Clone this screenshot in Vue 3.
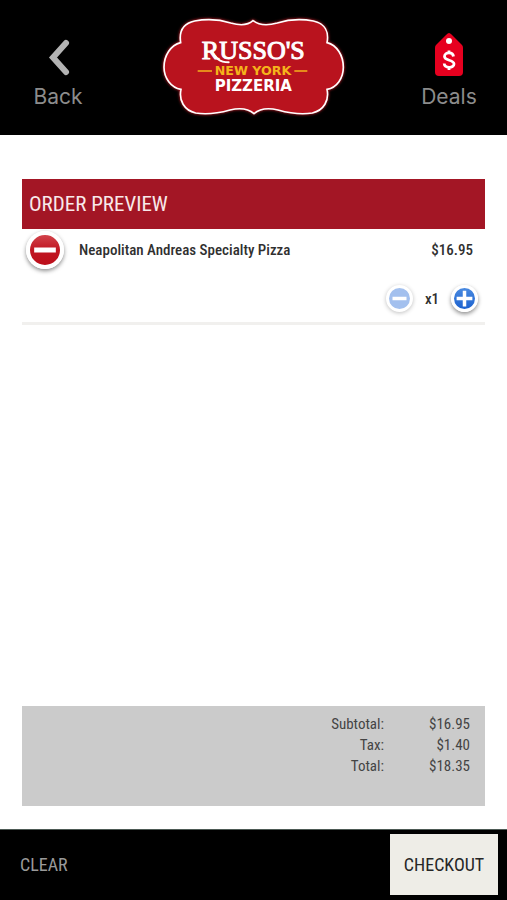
<script setup>
import { ref, computed } from 'vue'

const quantity = ref(1)
const price = 16.95
const tax = 1.4
const money = (n) => '$' + n.toFixed(2)
const lines = computed(() => [
  { label: 'Subtotal:', value: money(price * quantity.value) },
  { label: 'Tax:', value: money(tax * quantity.value) },
  { label: 'Total:', value: money((price + tax) * quantity.value) },
])
</script>

<template>
  <div class="screen">
    <header class="top">
      <a class="nav" href="#back">
        <svg class="nav-icon" viewBox="0 0 36 46" aria-hidden="true">
          <path d="M26 10 13 24.500 26 39" fill="none" stroke="#b3b3b3" stroke-width="6" stroke-linecap="round" />
        </svg>
        <span>Back</span>
      </a>
      <svg class="logo" viewBox="0 0 600 345" role="img">
        <path
          class="plaque"
          d="M297 38C315 52 342 53 370 45C405 34 445 33 478 39C514 47 525 73 519 104C549 112 568 142 568 178C568 210 549 239 519 244C526 277 510 307 475 315C440 321 408 316 372 306C342 299 316 303 300 317C284 303 258 299 228 306C192 316 160 321 125 315C90 307 74 277 81 244C51 239 30 210 30 178C30 142 50 112 80 104C75 73 86 47 122 39C155 33 195 34 230 45C258 53 282 52 297 38Z"
        />
        <text class="brand" x="298" y="153" text-anchor="middle">RUSSO'S</text>
        <path d="M172 128C184 150 196 163 224 163" fill="none" stroke="#fff" stroke-width="6" stroke-linecap="round" />
        <text class="city" x="297" y="202" text-anchor="middle">NEW YORK</text>
        <path d="M131 189H174M421 189H460" stroke="#f5b31b" stroke-width="5" />
        <text class="kind" x="298" y="250" text-anchor="middle">PIZZERIA</text>
      </svg>
      <a class="nav" href="#deals">
        <svg class="nav-icon" viewBox="0 0 36 46" aria-hidden="true">
          <path d="M18 0C19 0 20 1 21 2L31 12Q32 13 32 15V39Q32 43 28 43H8Q4 43 4 39V15Q4 13 5 12L15 2Q17 0 18 0Z" fill="#e6001f" />
          <circle cx="18" cy="8" r="3" fill="#fff" />
          <path d="M22.500 23.500C22 18.500 13.500 19 13.500 23.500C13.500 28 23 26.500 23 31C23 35.500 13.500 35.500 13.200 30.500M18 17.500V20.500M18 34V37" fill="none" stroke="#fff" stroke-width="2.800" />
        </svg>
        <span>Deals</span>
      </a>
    </header>

    <main class="body">
      <h1 class="title">ORDER PREVIEW</h1>
      <section class="item">
        <div class="row">
          <button class="disc remove" type="button" aria-label="Remove item">
            <svg viewBox="0 0 36 36"><path d="M5 18H31" stroke="#fff" stroke-width="6" /></svg>
          </button>
          <span class="name">Neapolitan Andreas Specialty Pizza</span>
          <span class="price">{{ money(price) }}</span>
        </div>
        <div class="stepper">
          <button class="disc minus" type="button" aria-label="Decrease quantity" @click="quantity = Math.max(1, quantity - 1)">
            <svg viewBox="0 0 24 24"><path d="M4 12H20" stroke="#fff" stroke-width="4" /></svg>
          </button>
          <span class="count">x{{ quantity }}</span>
          <button class="disc plus" type="button" aria-label="Increase quantity" @click="quantity++">
            <svg viewBox="0 0 24 24"><path d="M3 12H21M12 3V21" stroke="#fff" stroke-width="4" /></svg>
          </button>
        </div>
      </section>
      <dl class="totals">
        <div v-for="line in lines" :key="line.label" class="total">
          <dt>{{ line.label }}</dt>
          <dd>{{ line.value }}</dd>
        </div>
      </dl>
    </main>

    <footer class="actions">
      <button class="clear" type="button">CLEAR</button>
      <button class="checkout" type="button">CHECKOUT</button>
    </footer>
  </div>
</template>

<style>
body {
  margin: 0;
  background: #fff;
}
</style>

<style scoped>
.screen {
  display: flex;
  flex-direction: column;
  min-height: 100vh;
  font-family: "Roboto Condensed", "Liberation Sans Narrow", Roboto, sans-serif;
  color: #303030;
}
button {
  font: inherit;
  border: 0;
  padding: 0;
  cursor: pointer;
}
.top {
  display: flex;
  justify-content: space-between;
  align-items: flex-start;
  padding: 8px 22px 12px 22px;
  background: #000;
}
.nav {
  display: flex;
  flex-direction: column;
  align-items: center;
  gap: 6px;
  width: 72px;
  padding-top: 25px;
  font: 21px/24px Inter, sans-serif;
  color: #8c8c8c;
  text-decoration: none;
}
.nav-icon {
  width: 36px;
  height: 46px;
}
.logo {
  width: 200px;
  height: 115px;
}
.plaque {
  fill: #b9131e;
  stroke: #fff;
  stroke-width: 5;
  filter: drop-shadow(0 0 5px #e3202d);
}
.brand {
  font: 78px "Liberation Serif", serif;
  fill: #fff;
  stroke: #fff;
  stroke-width: 3;
}
.city {
  font: 700 38px "DejaVu Sans", sans-serif;
  fill: #f5b31b;
}
.kind {
  font: 700 45px "DejaVu Sans", sans-serif;
  fill: #fff;
}
.body {
  flex: 1;
  display: flex;
  flex-direction: column;
  padding: 44px 22px 23px;
}
.title {
  margin: 0;
  padding: 0 7px;
  font-size: 21px;
  font-weight: 400;
  line-height: 50px;
  color: #f8e9ea;
  background: #a31625;
}
.item {
  border-bottom: 3px solid #f1f0ee;
  font-size: 15px;
  font-weight: 500;
}
.row {
  display: flex;
  align-items: center;
  padding: 2px 12px 0 4px;
}
.name {
  flex: 1;
  margin-left: 15px;
}
.disc {
  display: block;
  box-sizing: border-box;
  border-radius: 50%;
  box-shadow: 0 2px 4px rgba(0, 0, 0, 0.45);
}
.disc svg {
  display: block;
}
.remove {
  width: 38px;
  height: 38px;
  border: 4px solid #fff;
  background: linear-gradient(#d2434b, #c01621 50%, #bd0f1b);
}
.stepper {
  display: flex;
  justify-content: flex-end;
  align-items: center;
  gap: 11px;
  padding: 16px 7px 10px;
}
.count {
  width: 16px;
  text-align: center;
}
.minus,
.plus {
  width: 27px;
  height: 27px;
  border: 3px solid #fff;
}
.minus {
  background: #a3c0ee;
  box-shadow: 0 1px 4px rgba(0, 0, 0, 0.25);
}
.plus {
  background: linear-gradient(#4a8ae0, #1c62cf);
}
.totals {
  margin: auto 0 0;
  padding: 8px 15px 29px;
  font-size: 15px;
  line-height: 21px;
  color: #444;
  background: #cbcbcb;
}
.total {
  display: flex;
  justify-content: flex-end;
}
.total dd {
  width: 86px;
  margin: 0;
  text-align: right;
}
.actions {
  display: flex;
  justify-content: space-between;
  padding: 4px 9px 5px 20px;
  border-top: 1px solid #4d5a55;
  background: #000;
  font-size: 18px;
}
.clear {
  background: none;
  color: #9a9a9a;
}
.checkout {
  width: 108px;
  height: 61px;
  background: #eeede7;
  color: #262626;
}
</style>
